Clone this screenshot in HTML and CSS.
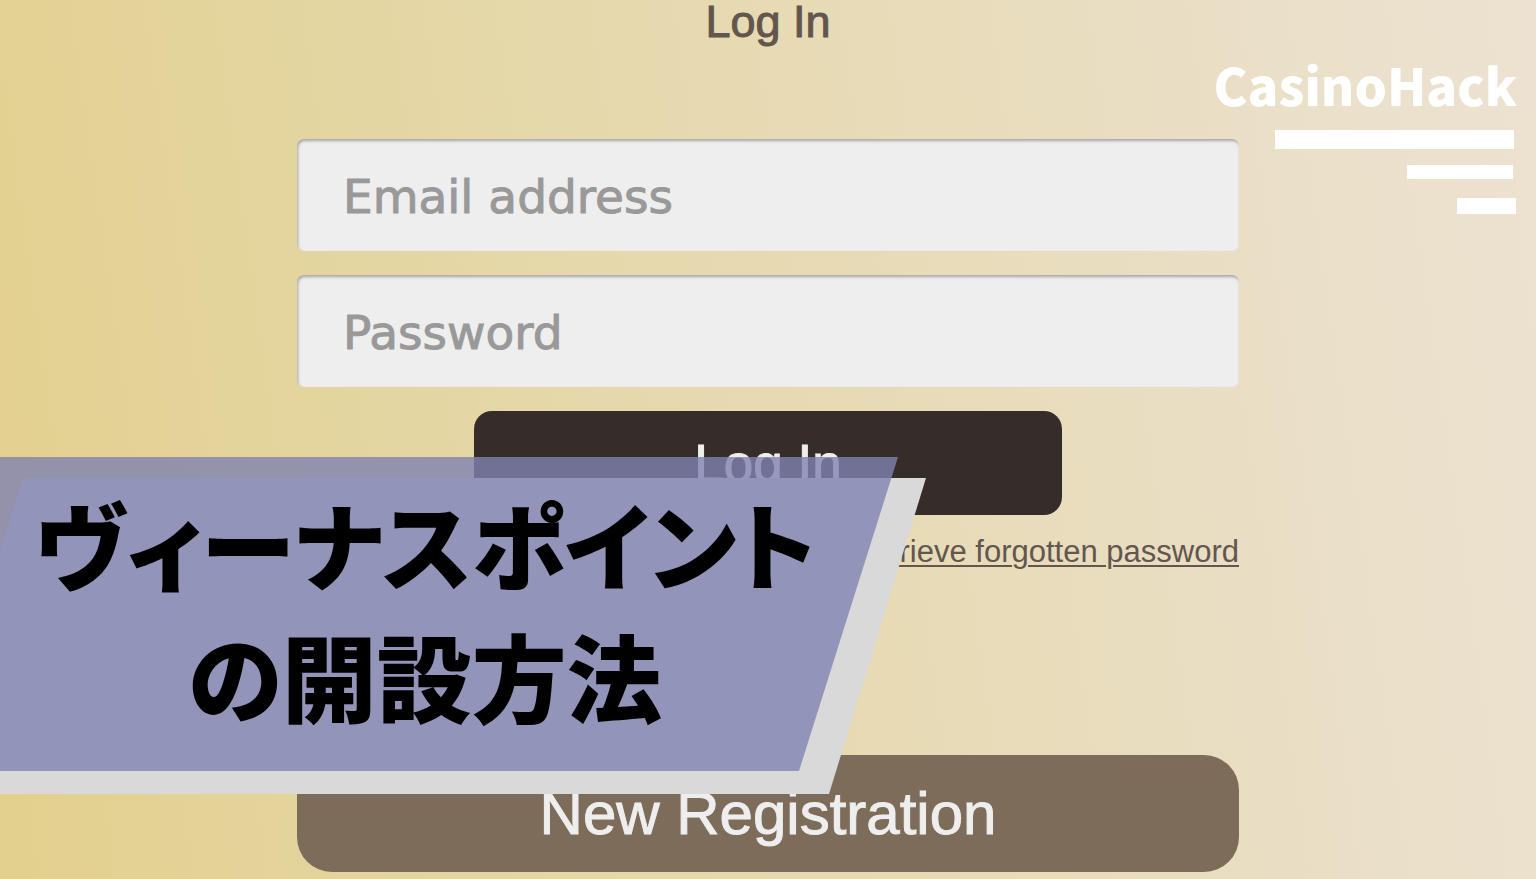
FILE: index.html
```html
<!DOCTYPE html>
<html lang="ja">
<head>
    <meta charset="UTF-8">
    <meta name="viewport" content="width=device-width, initial-scale=1.0">
    <title>ヴィーナスポイントの開設方法</title>
    <link rel="stylesheet" href="styles.css">
</head>
<body>
    <main class="login">
        <h2 class="login-title">Log In</h2>
        <form class="login-form">
            <input class="field" type="email" placeholder="Email address" aria-label="Email address">
            <input class="field" type="password" placeholder="Password" aria-label="Password">
            <button class="login-button" type="submit">Log In</button>
            <a class="forgot" href="#">Retrieve forgotten password</a>
            <button class="register-button" type="button">New Registration</button>
        </form>
    </main>

    <!-- Logo -->
    <div class="brand">
        <span class="brand-name">CasinoHack</span>
        <svg class="brand-bars" width="242" height="84" viewBox="0 0 242 84" fill="#fff" aria-hidden="true">
            <rect x="0" y="0" width="239" height="19"/>
            <rect x="132" y="35" width="106" height="14"/>
            <rect x="182" y="68" width="59" height="16"/>
        </svg>
    </div>

    <!-- Title banner -->
    <div class="banner">
        <div class="banner-shadow"></div>
        <div class="banner-panel">
            <h1 class="banner-title">ヴィーナスポイント<br>の開設方法</h1>
        </div>
    </div>
</body>
</html>
```

FILE: styles.css
```css
* {
    box-sizing: border-box;
}
body {
    margin: 0;
    position: relative;
    min-height: 100vh;
    overflow: hidden;
    font-family: "Liberation Sans", Arial, sans-serif;
    color: #62564f;
    background: linear-gradient(82deg, #e3d08e 0%, #e4d6a2 28%, #e7dab3 52%, #e9dec3 76%, #ede2d1 100%);
}
.login {
    width: 90%;
    max-width: 942px;
    margin: 0 auto;
}
.login-title {
    margin: 0;
    padding-bottom: 95px;
    font-size: 45px;
    font-weight: normal;
    line-height: 44px;
    text-align: center;
    -webkit-text-stroke: 1px #62564f;
}
.login-form {
    display: flex;
    flex-direction: column;
    align-items: center;
    gap: 24px;
}
.field {
    width: 100%;
    height: 112px;
    padding: 2px 46px 0;
    border: 0;
    border-radius: 7px;
    background: #eee;
    box-shadow: inset 1px 2px 3px rgba(0, 0, 0, .3);
    font-family: "DejaVu Sans", Verdana, sans-serif;
    font-size: 47px;
    color: #555;
}
.field::placeholder {
    color: #999;
    -webkit-text-stroke: 1px #999;
}
.login-button {
    width: 588px;
    max-width: 100%;
    height: 104px;
    border: 0;
    border-radius: 18px;
    background: #362d2b;
    font-family: inherit;
    font-size: 53px;
    color: #eee;
    -webkit-text-stroke: 1px #eee;
}
.forgot {
    align-self: flex-end;
    font-size: 31px;
    line-height: 26px;
    color: inherit;
    text-decoration-thickness: 2px;
    text-underline-offset: 3px;
}
.register-button {
    width: 100%;
    height: 117px;
    margin-top: 166px;
    border: 0;
    border-radius: 35px;
    background: #7e6c5a;
    font-family: inherit;
    font-size: 60px;
    color: #eee;
    -webkit-text-stroke: 1px #eee;
}
.brand {
    position: absolute;
    top: 54px;
    right: 19px;
    display: flex;
    flex-direction: column;
    align-items: flex-end;
    gap: 16px;
}
.brand-name {
    font-family: "Noto Sans CJK JP", sans-serif;
    font-size: 51px;
    font-weight: 900;
    line-height: 60px;
    color: #fff;
}
/* panel lies over its own grey shadow, both cut on a slant */
.banner {
    position: absolute;
    top: 457px;
    left: 0;
    width: 926px;
}
.banner-shadow {
    position: absolute;
    top: 21px;
    left: 0;
    width: 926px;
    height: 316px;
    background: #d9d9d9;
    clip-path: polygon(23px 0, 100% 0, 829px 100%, 0 100%, 0 73px);
}
.banner-panel {
    position: relative;
    width: 898px;
    height: 314px;
    padding: 20px 48px 0 0;
    background: rgba(127, 130, 176, .8);
    clip-path: polygon(0 0, 100% 0, 799px 100%, 0 100%);
}
.banner-title {
    margin: 0;
    font-family: "Noto Sans CJK JP", sans-serif;
    font-size: 95px;
    font-weight: 900;
    line-height: 132px;
    text-align: center;
    font-feature-settings: "palt";
    white-space: nowrap;
    color: #000;
}
```
